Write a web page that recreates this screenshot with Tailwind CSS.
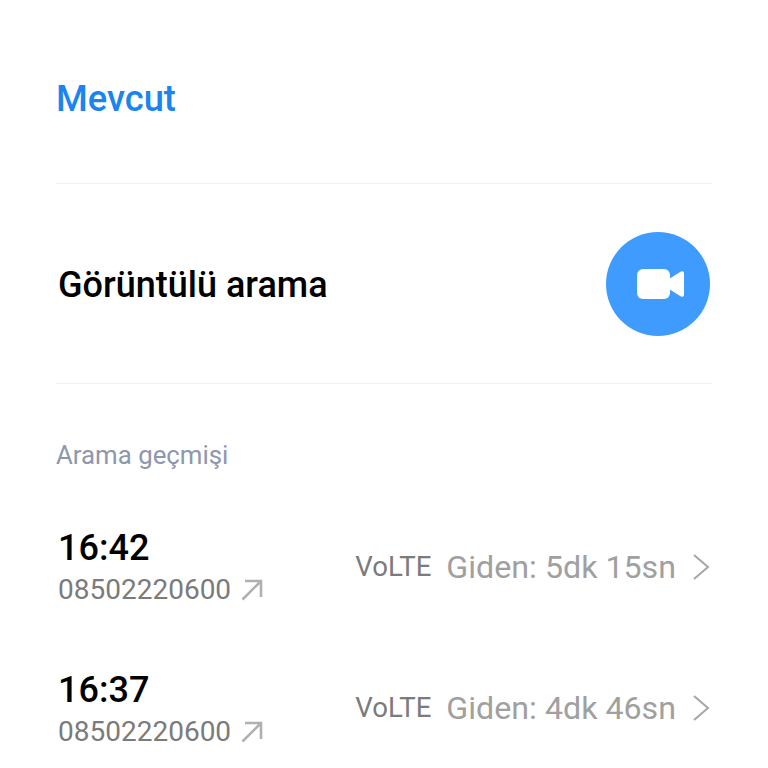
<!DOCTYPE html>
<html><head><meta charset="utf-8"><script src="https://cdn.jsdelivr.net/npm/@tailwindcss/browser@4"></script></head>
<body class="bg-white">
<div class="w-[768px] h-[768px] overflow-hidden font-['Roboto',sans-serif] bg-white px-[56px]">
  <div class="h-[184px] border-b border-[#f0f0f0] pt-[78px]">
    <div class="text-[36.3px] leading-[42px] font-medium text-[#1a85f0]">Mevcut</div>
  </div>
  <div class="h-[200px] border-b border-[#f0f0f0] flex items-center justify-between pl-[2px] pr-[2px]">
    <div class="text-[36px] font-medium text-black leading-[40px] mt-[3px]">Görüntülü arama</div>
    <div class="w-[104px] h-[104px] rounded-full bg-[#3f9bfd] flex items-center justify-center">
      <svg class="ml-[5px]" width="47" height="30" viewBox="0 0 47 30"><rect x="0" y="0" width="33" height="30" rx="6" fill="#fff"/><path d="M32 10 L44 2.5 Q47 1.5 47 4 V26 Q47 28.5 44 27.5 L32 20 Z" fill="#fff"/></svg>
    </div>
  </div>
  <div class="pt-[56px] text-[25.8px] leading-[30px] text-[#8e97ad]">Arama geçmişi</div>
  <div class="pt-[57px] flex flex-col gap-[59px] pl-[2px] pr-[2px]">
    <div class="flex items-center justify-between h-[83px]">
      <div>
        <div class="text-[36px] leading-[42px] font-medium text-black">16:42</div>
        <div class="flex items-center gap-[10px] text-[28px] leading-[42px] text-[#7b7b7b]">08502220600
          <svg width="22" height="22" viewBox="0 0 22 22" fill="none" stroke="#b0b0b0" stroke-width="2.6"><path d="M1.5 20.5 L20 2 M4 2 H20 V18"/></svg>
        </div>
      </div>
      <div class="flex items-center text-[32.2px] text-[#a0a0a0] leading-[36px] -mt-[3px]">
        <span class="text-[27.6px] text-[#7b7b7b] mr-[15px]">VoLTE</span><span>Giden: 5dk 15sn</span>
        <svg class="ml-[16px]" width="18" height="28" viewBox="0 0 18 28" fill="none" stroke="#a6a6a6" stroke-width="2"><path d="M2 2 L16 14 L2 26"/></svg>
      </div>
    </div>
    <div class="flex items-center justify-between h-[83px] -mt-px">
      <div class="mt-[3px]">
        <div class="text-[36px] leading-[42px] font-medium text-black">16:37</div>
        <div class="flex items-center gap-[10px] text-[28px] leading-[42px] text-[#7b7b7b]">08502220600
          <svg width="22" height="22" viewBox="0 0 22 22" fill="none" stroke="#b0b0b0" stroke-width="2.6"><path d="M1.5 20.5 L20 2 M4 2 H20 V18"/></svg>
        </div>
      </div>
      <div class="flex items-center text-[32.2px] text-[#a0a0a0] leading-[36px] -mt-[3px]">
        <span class="text-[27.6px] text-[#7b7b7b] mr-[15px]">VoLTE</span><span>Giden: 4dk 46sn</span>
        <svg class="ml-[16px]" width="18" height="28" viewBox="0 0 18 28" fill="none" stroke="#a6a6a6" stroke-width="2"><path d="M2 2 L16 14 L2 26"/></svg>
      </div>
    </div>
  </div>
</div>
</body></html>
